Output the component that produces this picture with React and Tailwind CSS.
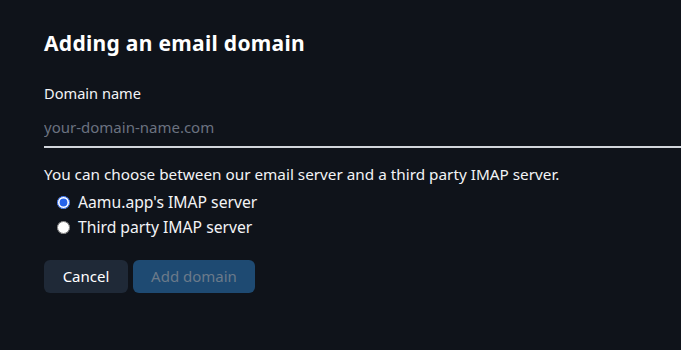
export default function App() {
  return (
    <div className="min-h-[350px] w-full overflow-hidden bg-[#0f131a] pl-[44px] pt-[29px] text-[#f3f4f6]" style={{ fontFamily: '"Noto Sans", sans-serif' }}>
      <h1 className="text-[21px] font-bold leading-[28px] tracking-[0.3px] text-white">Adding an email domain</h1>

      <div className="mt-[25px]">
        <label className="block text-[14.6px] leading-[22px]">Domain name</label>
        <input
          type="text"
          placeholder="your-domain-name.com"
          className="mt-[9px] block w-[700px] border-b-2 border-[#d1d5db] bg-transparent pb-[8px] pt-[3px] text-[15px] leading-[22px] text-white outline-none placeholder:text-[#6b7280]"
        />
      </div>

      <p className="mt-[15px] text-[15.3px] leading-[22px]">
        You can choose between our email server and a third party IMAP server.
      </p>
      <div className="mt-[5px] flex flex-col pl-[13px]">
        <label className="flex h-[25px] items-center gap-[8px] text-[15.7px]">
          <input type="radio" name="server" defaultChecked className="m-0 h-[13px] w-[13px] accent-[#2563eb]" />
          Aamu.app's IMAP server
        </label>
        <label className="flex h-[25px] items-center gap-[8px] text-[15.7px]">
          <input type="radio" name="server" className="m-0 h-[13px] w-[13px]" />
          Third party IMAP server
        </label>
      </div>

      <div className="mt-[20px] flex gap-[5px]">
        <button className="h-[33px] w-[84px] rounded-md bg-[#1f2937] text-[15px] text-white">Cancel</button>
        <button disabled className="h-[33px] w-[122px] rounded-md bg-[#1e4a72] text-[15px] text-[#6b7a8a]">Add domain</button>
      </div>
    </div>
  );
}
